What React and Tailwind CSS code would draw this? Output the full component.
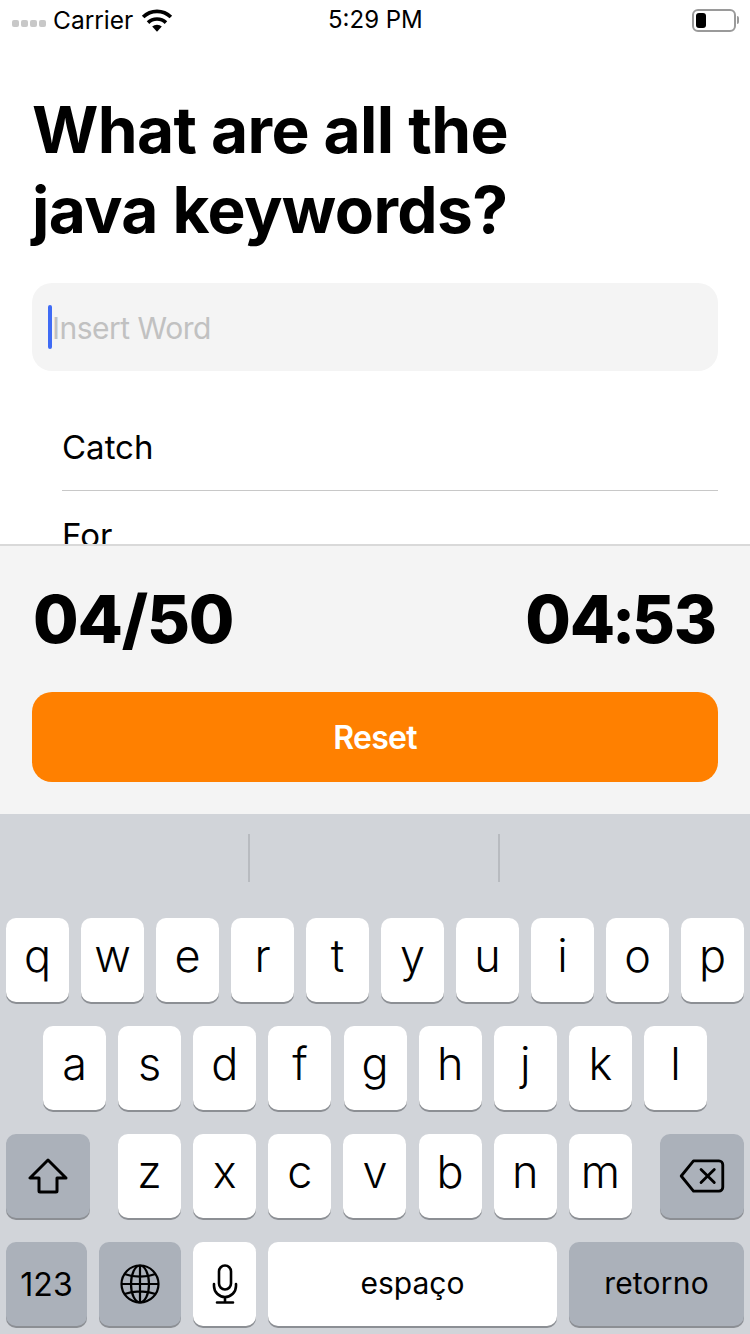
const FONT = "font-['Inter','Liberation_Sans',sans-serif]"

function Key({ children, wide, dark, className = '' }) {
  const base = dark ? 'bg-[#abb1ba]' : 'bg-white'
  return (
    <div
      className={`h-[84px] rounded-[10px] flex items-center justify-center text-black shadow-[0_2px_0_#8c8f94] ${base} ${wide ? '' : 'w-[63px]'} ${className}`}
    >
      {children}
    </div>
  )
}

function Letter({ ch }) {
  return (
    <Key>
      <span className="text-[45px] leading-none font-light pb-[9px]">{ch}</span>
    </Key>
  )
}

function StatusBar() {
  return (
    <div className="h-10 shrink-0 flex items-center justify-between pl-3 pr-[11px] relative text-black">
      <div className="flex items-center">
        <div className="flex gap-[2px] mt-[7px]">
          <span className="w-[7px] h-[7px] rounded-[2px] bg-[#c8c8c8]" />
          <span className="w-[7px] h-[7px] rounded-[2px] bg-[#c8c8c8]" />
          <span className="w-[7px] h-[7px] rounded-[2px] bg-[#c8c8c8]" />
          <span className="w-[7px] h-[7px] rounded-[2px] bg-[#c8c8c8]" />
        </div>
        <span className="ml-[7px] text-[24.5px] leading-none">Carrier</span>
        <svg className="ml-[8px]" width="32" height="24" viewBox="0 0 30 22">
          <path d="M15 22 10.5 17.2a6.4 6.4 0 0 1 9 0Z" fill="#000" />
          <path d="M6.6 13.5a12 12 0 0 1 16.8 0" fill="none" stroke="#000" strokeWidth="3.4" />
          <path d="M2 8.2a18.5 18.5 0 0 1 26 0" fill="none" stroke="#000" strokeWidth="3.4" />
        </svg>
      </div>
      <span className="absolute left-[328px] top-[7px] text-[24px] leading-[26px]">5:29 PM</span>
      <div className="flex items-center">
        <div className="w-[44px] h-[23px] rounded-[6px] border-2 border-[#9a9a9a] p-[2px]">
          <div className="w-[10px] h-full rounded-[3px] bg-black" />
        </div>
        <div className="w-[2px] h-[8px] bg-[#9a9a9a] ml-[1px] rounded-r-full" />
      </div>
    </div>
  )
}

export default function App() {
  return (
    <div className={`w-[750px] h-[1334px] overflow-hidden flex flex-col bg-white ${FONT}`}>
      <StatusBar />

      <div className="flex-1 min-h-0 overflow-hidden px-8">
        <h1 className="mt-[50px] text-[64px] leading-[80px] font-bold tracking-[-0.6px] text-black">
          <div>What are all the</div>
          <div>java keywords?</div>
        </h1>
        <div className="mt-[33px] h-[88px] rounded-[20px] bg-[#f4f4f4] flex items-center pl-4">
          <span className="w-[4px] h-[44px] rounded-full bg-[#3f6bf5]" />
          <span className="text-[30px] tracking-[-0.5px] text-[#c1c1c1] pt-[2px]">Insert Word</span>
        </div>
        <div className="mt-[33px] pl-[30px]">
          <div className="h-[87px] border-b border-[#c8c8c8] flex items-center text-[33px] text-black pt-[2px]">
            Catch
          </div>
          <div className="h-[87px] flex items-center text-[33px] text-black pt-[2px]">For</div>
        </div>
      </div>

      <div className="h-[270px] shrink-0 bg-[#f4f4f4] border-t-2 border-[#d9d9d9] px-8">
        <div className="h-[146px] flex items-center justify-between text-[66px] tracking-[-1.2px] font-extrabold leading-none text-black pl-[1px]">
          <span>04/50</span>
          <span className="pr-[2px]">
            04<span className="-mx-[2px]">:</span>53
          </span>
        </div>
        <div className="h-[90px] rounded-[20px] bg-[#ff8000] flex items-center justify-center text-[32px] tracking-[-0.7px] font-semibold text-white pt-[2px]">
          Reset
        </div>
      </div>

      <div className="h-[520px] shrink-0 bg-[#d1d4d9]">
        <div className="h-[104px] flex items-start pt-5">
          <span className="ml-[248px] w-[2px] h-12 bg-[#b8bbc0]" />
          <span className="ml-[248px] w-[2px] h-12 bg-[#b8bbc0]" />
        </div>

        <div className="flex flex-col gap-6 px-[6px]">
          <div className="flex gap-3">
            {'qwertyuiop'.split('').map(ch => <Letter key={ch} ch={ch} />)}
          </div>

          <div className="flex gap-[12.15px] pl-[37px]">
            {'asdfghjkl'.split('').map(ch => <Letter key={ch} ch={ch} />)}
          </div>

          <div className="flex">
            <Key dark wide className="w-[84px]">
              <svg width="40" height="36" viewBox="0 0 40 36" fill="none" stroke="#000" strokeWidth="3" strokeLinejoin="round">
                <path d="M20 2 2 20h9v13a1 1 0 0 0 1 1h16a1 1 0 0 0 1-1V20h9Z" />
              </svg>
            </Key>
            <div className="flex gap-[12.15px] ml-[28px]">
              {'zxcvbnm'.split('').map(ch => <Letter key={ch} ch={ch} />)}
            </div>
            <Key dark wide className="w-[84px] ml-[28px]">
              <svg width="46" height="34" viewBox="0 0 48 36" fill="none" stroke="#000" strokeWidth="3" strokeLinejoin="round" strokeLinecap="round">
                <path d="M15 2h27a4 4 0 0 1 4 4v24a4 4 0 0 1-4 4H15L2 18Z" />
                <path d="M23 11l14 14M37 11 23 25" />
              </svg>
            </Key>
          </div>

          <div className="flex gap-3">
            <Key dark wide className="w-[81px]">
              <span className="text-[32px] pt-[2px]">123</span>
            </Key>
            <Key dark wide className="w-[82px]">
              <svg width="40" height="40" viewBox="0 0 40 40" fill="none" stroke="#000" strokeWidth="2.2">
                <circle cx="20" cy="20" r="18.5" />
                <ellipse cx="20" cy="20" rx="9" ry="18.5" />
                <path d="M20 1.5v37M1.5 20h37M4.5 10c9 3.5 22 3.5 31 0M4.5 30c9-3.5 22-3.5 31 0" />
              </svg>
            </Key>
            <Key>
              <svg width="26" height="40" viewBox="0 0 26 40" fill="none" stroke="#000" strokeWidth="2.6" strokeLinecap="round">
                <rect x="7" y="1.5" width="12" height="24" rx="6" />
                <path d="M2 20v2a11 11 0 0 0 22 0v-2M13 33v5M5 38.5h16" />
              </svg>
            </Key>
            <Key wide className="w-[289px]">
              <span className="text-[30px] pb-[2px]">espaço</span>
            </Key>
            <Key dark wide className="w-[175px]">
              <span className="text-[30px] tracking-[0.2px] pb-[2px]">retorno</span>
            </Key>
          </div>
        </div>
      </div>
    </div>
  )
}
